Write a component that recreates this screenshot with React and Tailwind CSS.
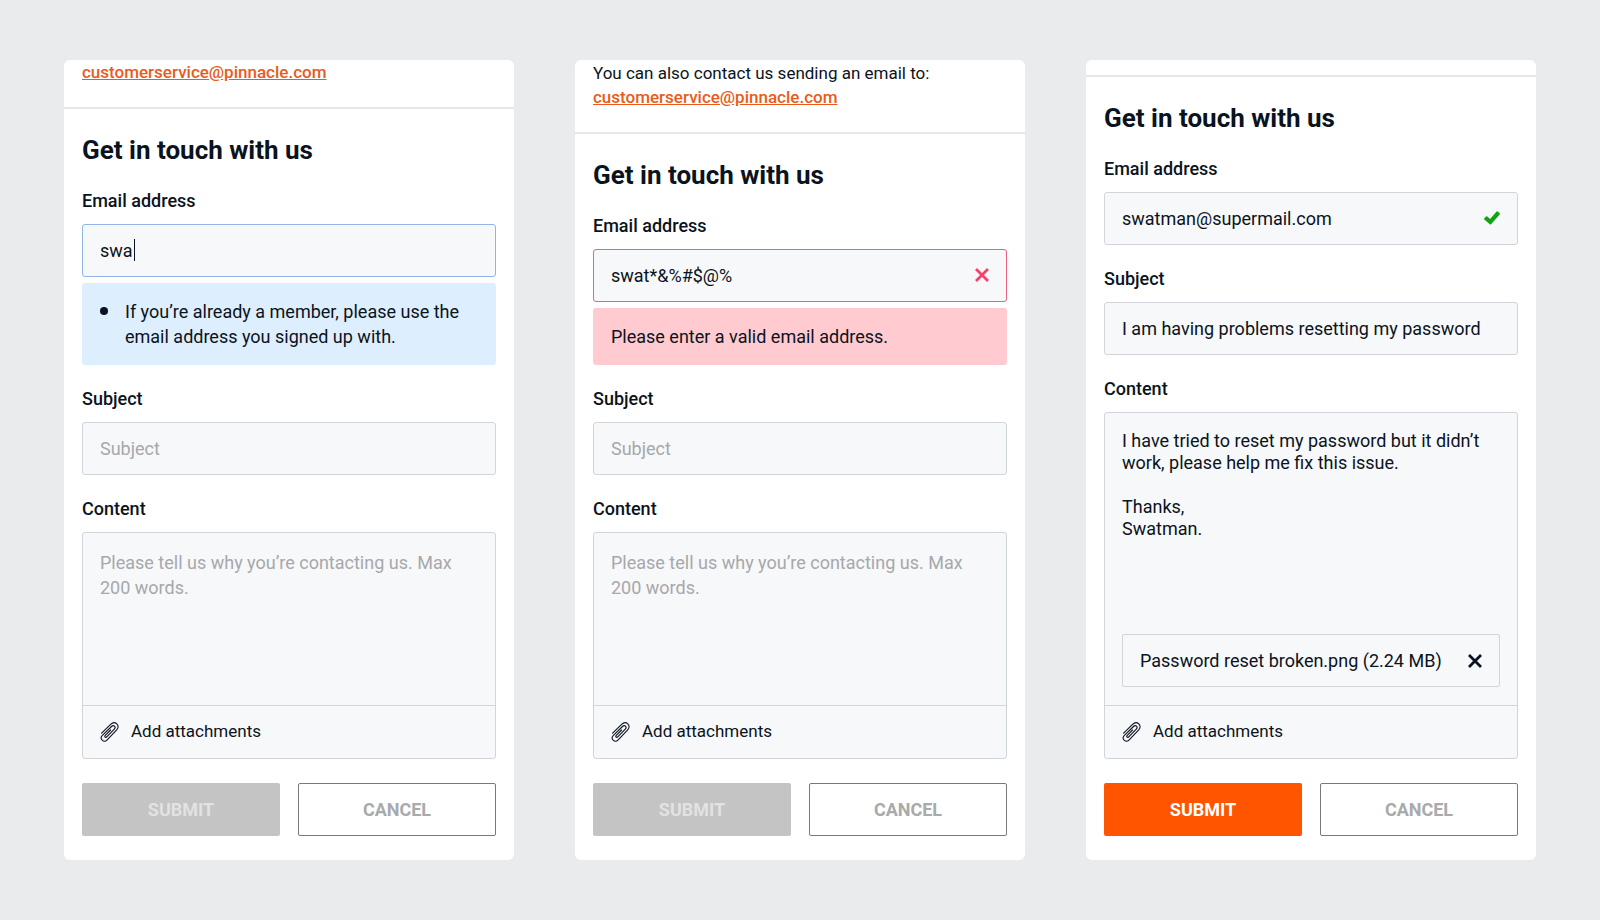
import React from "react";

const forms = [
  {
    id: "typing",
    contact: "link",
    email: "swa",
    emailState: "focused",
  },
  {
    id: "invalid",
    contact: "full",
    email: "swat*&%#$@%",
    emailState: "error",
  },
  {
    id: "complete",
    contact: "none",
    email: "swatman@supermail.com",
    emailState: "valid",
    subject: "I am having problems resetting my password",
    content:
      "I have tried to reset my password but it didn’t work, please help me fix this issue.\n\nThanks,\nSwatman.",
    attachment: "Password reset broken.png (2.24 MB)",
  },
];

const borderByState = {
  focused: "border-[#8fb6e6]",
  error: "border-[#ee5f84]",
  valid: "border-[#d0d5db]",
};

const inputClass =
  "block w-full h-[53px] px-[17px] border rounded-[3px] bg-[#f7f8fa] text-[18px] outline-none placeholder:text-[#a6a8ab]";

const CrossIcon = ({ className }) => (
  <svg viewBox="0 0 14 14" className={className} aria-hidden="true">
    <path d="M1 1L13 13M13 1L1 13" fill="none" stroke="currentColor" strokeWidth="2.8" />
  </svg>
);

const CheckIcon = ({ className }) => (
  <svg viewBox="0 0 16 14" className={className} aria-hidden="true">
    <path
      d="M0.3 7.3L2.2 5.4Q2.8 4.9 3.4 5.4L6.1 7.9L12.6 0.5Q13.1 0 13.7 0.5L15.7 2.2Q16.2 2.8 15.7 3.4L7 13.3Q6.4 13.9 5.8 13.3L0.3 8.4Q-0.2 7.9 0.3 7.3Z"
      fill="currentColor"
    />
  </svg>
);

const PaperclipIcon = () => (
  <svg viewBox="0 0 20 20" className="w-5 h-5 shrink-0" aria-hidden="true">
    <path
      d="M1.6 11.2L10.6 2.4C12.6 0.4 15 0.2 16.8 1.8C18.6 3.5 18.5 6 16.7 7.8L7.2 17.8C5.7 19.4 3.6 19.5 2.2 18.2C0.8 16.8 0.9 14.9 2.4 13.4L11.5 4.5C12.5 3.5 13.7 3.5 14.5 4.2C15.3 5 15.2 6.2 14.3 7.1L7 14.7C6.3 15.5 5.6 15.5 5.1 15.1C4.6 14.6 4.7 13.9 5.3 13.3L10.6 8"
      fill="none"
      stroke="currentColor"
      strokeWidth="1.1"
      strokeLinecap="round"
      strokeLinejoin="round"
    />
  </svg>
);

const Label = ({ htmlFor, children }) => (
  <label htmlFor={htmlFor} className="block mb-[11px] leading-[24px] font-medium">
    {children}
  </label>
);

const ContactInfo = ({ variant }) => {
  if (variant === "none") {
    return <div className="h-[17px] border-b-2 border-[#e6e7e9]" />;
  }

  return (
    <div className="px-[18px] pb-[23px] border-b-2 border-[#e6e7e9] text-[17px] leading-[24px]">
      {variant === "full" && <p className="pt-px">You can also contact us sending an email to:</p>}
      <a
        href="mailto:customerservice@pinnacle.com"
        className="block w-fit font-medium text-[#ea5b1b] underline"
      >
        customerservice@pinnacle.com
      </a>
    </div>
  );
};

const EmailField = ({ id, value, state }) => (
  <div>
    <Label htmlFor={`${id}-email`}>Email address</Label>
    <div className="relative">
      <input
        id={`${id}-email`}
        type="text"
        inputMode="email"
        defaultValue={value}
        aria-invalid={state === "error"}
        className={`${inputClass} ${borderByState[state]}`}
      />
      {state === "focused" && (
        <span className="absolute left-[52px] top-[15px] w-px h-[22px] bg-[#0b1320]" />
      )}
      {state === "error" && (
        <CrossIcon className="absolute right-[18px] top-[19px] w-3.5 h-3.5 text-[#f5426c]" />
      )}
      {state === "valid" && (
        <CheckIcon className="absolute right-[18px] top-[19px] w-4 h-3.5 text-[#12a312]" />
      )}
    </div>

    {/* Messages under the field */}
    {state === "focused" && (
      <ul className="mt-1.5 py-4 pl-[43px] pr-[18px] rounded-[3px] bg-[#ddeefe] leading-[25px]">
        <li className="relative">
          <span className="absolute -left-[25px] top-2 w-2 h-2 rounded-full bg-[#0b1320]" />
          If you’re already a member, please use the email address you signed up with.
        </li>
      </ul>
    )}
    {state === "error" && (
      <p className="mt-1.5 py-4 px-[18px] rounded-[3px] bg-[#ffcbd0] leading-[25px]">
        Please enter a valid email address.
      </p>
    )}
  </div>
);

const ContentField = ({ id, value, attachment }) => (
  <div>
    <Label htmlFor={`${id}-content`}>Content</Label>
    <div className="border border-[#d0d5db] rounded-[3px] bg-[#f7f8fa]">
      <textarea
        id={`${id}-content`}
        defaultValue={value}
        placeholder="Please tell us why you’re contacting us. Max 200 words."
        className={`block w-full p-[17px] resize-none outline-none bg-transparent placeholder:text-[#a6a8ab] ${
          attachment ? "h-[221px] leading-[22px]" : "h-[172px] leading-[25px]"
        }`}
      />
      {attachment && (
        <div className="flex items-center justify-between h-[53px] mx-[17px] mb-[18px] px-[17px] border border-[#d0d5db] rounded-[2px]">
          <span>{attachment}</span>
          <button type="button" aria-label="Remove attachment">
            <CrossIcon className="w-3.5 h-3.5" />
          </button>
        </div>
      )}
      <button
        type="button"
        className="flex items-center gap-[11px] w-full h-[53px] px-[17px] border-t border-[#d0d5db] text-[17px]"
      >
        <PaperclipIcon />
        Add attachments
      </button>
    </div>
  </div>
);

const ContactCard = ({ form }) => {
  const ready = Boolean(form.subject && form.content);

  return (
    <section className="rounded-[6px] bg-white overflow-hidden">
      <ContactInfo variant={form.contact} />

      <form className="px-[18px] py-6" onSubmit={(e) => e.preventDefault()}>
        <h2 className="mb-[22px] text-[26px] leading-[34px] font-bold">Get in touch with us</h2>

        <div className="flex flex-col gap-[22px]">
          <EmailField id={form.id} value={form.email} state={form.emailState} />

          <div>
            <Label htmlFor={`${form.id}-subject`}>Subject</Label>
            <input
              id={`${form.id}-subject`}
              type="text"
              defaultValue={form.subject}
              placeholder="Subject"
              className={`${inputClass} border-[#d0d5db]`}
            />
          </div>

          <ContentField id={form.id} value={form.content} attachment={form.attachment} />
        </div>

        {/* Buttons */}
        <div className="grid grid-cols-2 gap-[18px] mt-6">
          <button
            type="submit"
            disabled={!ready}
            className={`h-[53px] rounded-[2px] font-bold ${
              ready ? "bg-[#ff5500] text-white" : "bg-[#c4c4c4] text-[#e2e2e2]"
            }`}
          >
            SUBMIT
          </button>
          <button
            type="button"
            className="h-[53px] rounded-[2px] border border-[#77797c] bg-white font-bold text-[#a8aaac]"
          >
            CANCEL
          </button>
        </div>
      </form>
    </section>
  );
};

const App = () => {
  return (
    <main className="min-h-screen px-16 py-15 bg-[#e9ebed] font-['Roboto',sans-serif] text-[18px] text-[#0b1320]">
      <div className="grid grid-cols-3 items-start gap-[61px]">
        {forms.map((form) => (
          <ContactCard key={form.id} form={form} />
        ))}
      </div>
    </main>
  );
};

export default App;
